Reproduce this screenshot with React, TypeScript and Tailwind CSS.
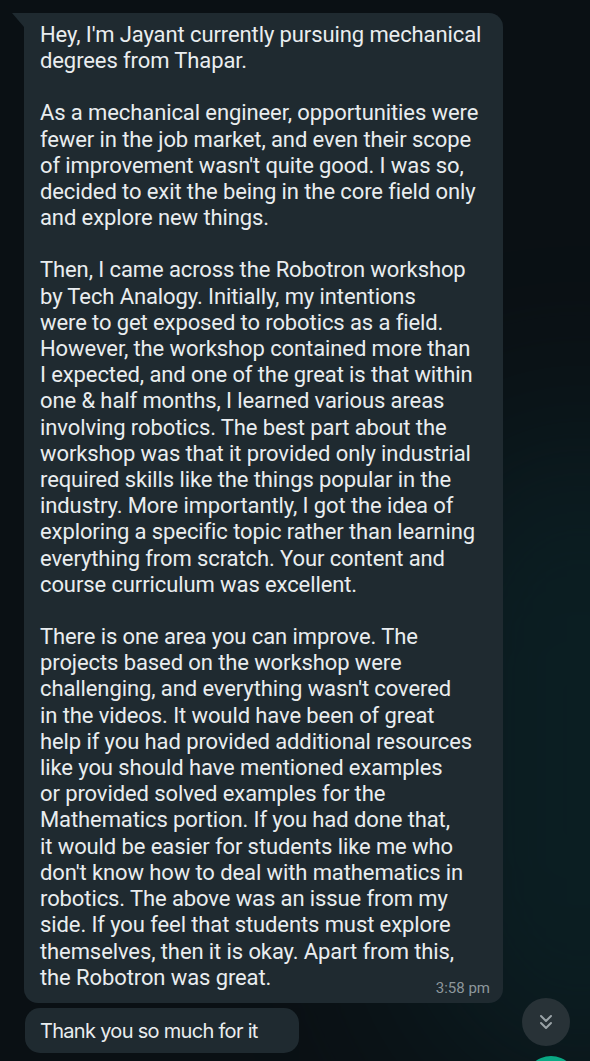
import { ChevronsDown } from 'lucide-react';

const paragraphs: string[][] = [
  ["Hey, I'm Jayant currently pursuing mechanical", 'degrees from Thapar.'],
  [
    'As a mechanical engineer, opportunities were',
    'fewer in the job market, and even their scope',
    "of improvement wasn't quite good. I was so,",
    'decided to exit the being in the core field only',
    'and explore new things.',
  ],
  [
    'Then, I came across the Robotron workshop',
    'by Tech Analogy. Initially, my intentions',
    'were to get exposed to robotics as a field.',
    'However, the workshop contained more than',
    'I expected, and one of the great is that within',
    'one & half months, I learned various areas',
    'involving robotics. The best part about the',
    'workshop was that it provided only industrial',
    'required skills like the things popular in the',
    'industry. More importantly, I got the idea of',
    'exploring a specific topic rather than learning',
    'everything from scratch. Your content and',
    'course curriculum was excellent.',
  ],
  [
    'There is one area you can improve. The',
    'projects based on the workshop were',
    "challenging, and everything wasn't covered",
    'in the videos. It would have been of great',
    'help if you had provided additional resources',
    'like you should have mentioned examples',
    'or provided solved examples for the',
    'Mathematics portion. If you had done that,',
    'it would be easier for students like me who',
    "don't know how to deal with mathematics in",
    'robotics. The above was an issue from my',
    'side. If you feel that students must explore',
    'themselves, then it is okay. Apart from this,',
    'the Robotron was great.',
  ],
];

export default function App() {
  return (
    <div className="relative w-[590px] h-[1061px] overflow-hidden bg-[#0a1014]">
      {/* teal glow on the right */}
      <div className="absolute right-[-160px] top-[420px] w-[340px] h-[680px] rounded-full bg-[#0f3a3f] opacity-35 blur-[90px]" />

      <div className="relative flex flex-col pt-[13px] pl-[24px]">
        {/* main bubble */}
        <div className="relative w-[479px] rounded-[14px] rounded-tl-none bg-[#1f2a30] pl-[16px] pr-[12px] pt-[9px] pb-[4px]">
          <div className="absolute left-[-12px] top-0 w-0 h-0 border-t-[14px] border-t-[#1f2a30] border-l-[12px] border-l-transparent" />
          <div className="flex flex-col gap-[26px] font-['Roboto',sans-serif] text-[22px] leading-[26.2px] text-[#e9edef] tracking-[-0.1px]">
            {paragraphs.map((p, i) => (
              <p key={i}>
                {p.map((line, j) => (
                  <span key={j} className="block whitespace-nowrap">
                    {line}
                  </span>
                ))}
              </p>
            ))}
          </div>
          <div className="flex justify-end mt-[-14px] pr-[1px]">
            <span className="font-['Roboto',sans-serif] text-[15px] text-[#8d979c]">3:58 pm</span>
          </div>
        </div>

        {/* second bubble */}
        <div className="mt-[5px] ml-[1px] w-[274px] h-[45px] flex items-center rounded-[15px] bg-[#1f2a30] pl-[15px]">
          <span className="font-['Inter',sans-serif] text-[20px] tracking-[-0.7px] text-[#e9edef]">
            Thank you so much for it
          </span>
        </div>
      </div>

      {/* scroll down button */}
      <div className="absolute left-[522px] top-[998px] w-[48px] h-[48px] rounded-full bg-[#283237] flex items-center justify-center">
        <ChevronsDown size={24} strokeWidth={2} className="text-[#9aa3a7]" />
      </div>
      <div className="absolute left-[525px] top-[1056px] w-[52px] h-[52px] rounded-full bg-[#0aa884]" />
    </div>
  );
}
